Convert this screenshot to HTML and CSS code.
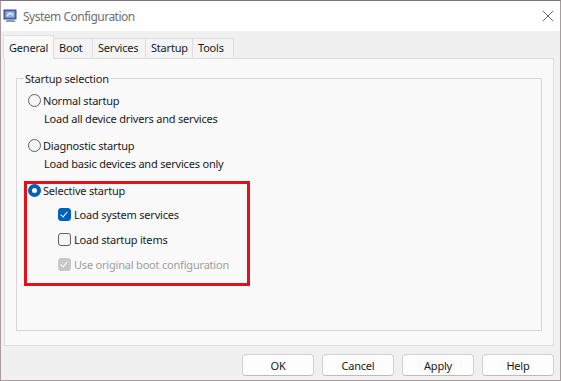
FILE: index.html
```html
<!DOCTYPE html>
<html lang="en">
<head>
  <meta charset="UTF-8" />
  <title>System Configuration</title>
  <link rel="stylesheet" href="styles.css">
</head>
<body>
  <div class="window">
    <header class="titlebar">
      <svg class="app-icon" width="15" height="14" viewBox="0 0 15 14">
        <rect x="1" y="1" width="12" height="9" fill="#5a6fb5" stroke="#3b4c8c" stroke-width="1"/>
        <rect x="2.5" y="2.5" width="9" height="6" fill="#8fb2e8"/>
        <path d="M4 7 L7 4 L10 6" stroke="#ffffff" stroke-width="1.2" fill="none"/>
        <path d="M4 11 L11 11 L13 13 L2 13 Z" fill="#9a9a9a"/>
      </svg>
      <span class="title">System Configuration</span>
      <svg class="close" width="12" height="12" viewBox="0 0 12 12">
        <path d="M1 1 L11 11 M11 1 L1 11" stroke="#6a6a6a" stroke-width="1"/>
      </svg>
    </header>

    <div class="content">
      <nav class="tabs">
        <div class="tab active">General</div>
        <div class="tab">Boot</div>
        <div class="tab">Services</div>
        <div class="tab">Startup</div>
        <div class="tab">Tools</div>
      </nav>

      <section class="page">
        <fieldset class="group">
          <legend>Startup selection</legend>

          <div class="option">
            <div class="row"><span class="radio"></span>Normal startup</div>
            <div class="desc">Load all device drivers and services</div>
          </div>

          <div class="option">
            <div class="row"><span class="radio"></span>Diagnostic startup</div>
            <div class="desc">Load basic devices and services only</div>
          </div>

          <div class="highlight">
            <div class="row"><span class="radio checked"></span>Selective startup</div>
            <div class="check-row"><span class="checkbox checked"></span>Load system services</div>
            <div class="check-row"><span class="checkbox"></span>Load startup items</div>
            <div class="check-row disabled"><span class="checkbox checked"></span>Use original boot configuration</div>
          </div>
        </fieldset>
      </section>

      <footer class="buttons">
        <button>OK</button>
        <button>Cancel</button>
        <button>Apply</button>
        <button>Help</button>
      </footer>
    </div>
  </div>
</body>
</html>
```

FILE: styles.css
```css
body {
  margin: 0;
  font-family: "Noto Sans", "Open Sans", sans-serif;
  font-size: 11px;
  letter-spacing: -0.2px;
  color: #1a1a1a;
  background: #ffffff;
}

.window {
  width: 561px;
  height: 381px;
  box-sizing: border-box;
  border: 1px solid #a99a9c;
  border-top-color: #7e7476;
  display: flex;
  flex-direction: column;
  background: #f0f0f0;
}

/* title bar */
.titlebar {
  height: 30px;
  background: #ffffff;
  display: flex;
  align-items: center;
  padding: 0 6px 0 2px;
  flex-shrink: 0;
}
.app-icon {
  margin-right: 5px;
}
.title {
  color: #707070;
  font-size: 12px;
  letter-spacing: -0.5px;
  flex: 1;
}

/* body of the dialog */
.content {
  flex: 1;
  display: flex;
  flex-direction: column;
  padding: 3px 6px 4px 2px;
}

.tabs {
  display: flex;
  align-items: flex-end;
  height: 24px;
  position: relative;
  z-index: 1;
}
.tab {
  height: 19px;
  line-height: 18px;
  box-sizing: border-box;
  padding: 0 0 0 5px;
  border: 1px solid #dedede;
  border-bottom: none;
  border-left: none;
  background: #f4f4f4;
  margin-bottom: 1px;
}
.tab.active {
  width: 51px;
  height: 24px;
  line-height: 24px;
  padding: 0 0 0 5px;
  background: #f9f9f9;
  border-left: 1px solid #dedede;
  margin-bottom: -1px;
}
.tab:nth-child(2) { width: 39px; }
.tab:nth-child(3) { width: 53px; }
.tab:nth-child(4) { width: 47px; }
.tab:nth-child(5) { width: 41px; }

.page {
  flex: 1;
  background: #f9f9f9;
  border: 1px solid #dcdcdc;
  margin-left: 1px;
  padding: 12px 11px 14px 11px;
  display: flex;
}

/* group box */
.group {
  flex: 1;
  margin: 0;
  border: 1px solid #d6d6d6;
  padding: 5px 7px 0 7px;
}
.group legend {
  padding: 0 1px;
}

.option {
  margin-bottom: 7px;
}

.row {
  display: flex;
  align-items: center;
  height: 19px;
  padding-left: 4px;
}
.desc {
  height: 19px;
  line-height: 18px;
  padding-left: 20px;
}

.radio {
  width: 11px;
  height: 11px;
  border: 1px solid #616161;
  border-radius: 50%;
  background: #f6f6f6;
  margin-right: 2px;
  flex-shrink: 0;
}
.radio.checked {
  width: 5px;
  height: 5px;
  border: 4px solid #005fb8;
  background: #ffffff;
}

.highlight {
  width: 219px;
  border: 3px solid #e0131c;
  padding: 0 0 6px 1px;
  margin-top: 0;
}
.highlight .row {
  padding-left: 0;
  height: 12px;
  margin-bottom: 6px;
}

.check-row {
  display: flex;
  align-items: center;
  height: 25px;
  padding-left: 30px;
  white-space: nowrap;
}
.check-row.disabled {
  color: #9d9d9d;
}

.checkbox {
  width: 11px;
  height: 11px;
  border: 1px solid #5f5f5f;
  border-radius: 3px;
  background: #f6f6f6;
  margin-right: 3px;
  position: relative;
  flex-shrink: 0;
}
.checkbox.checked {
  background: #005fb8;
  border-color: #005fb8;
}
.checkbox.checked::after {
  content: "";
  position: absolute;
  left: 3px;
  top: 1px;
  width: 3px;
  height: 6px;
  border: solid #ffffff;
  border-width: 0 1px 1px 0;
  transform: rotate(40deg);
}
.check-row.disabled .checkbox {
  background: #c7c7c7;
  border-color: #c7c7c7;
}

/* bottom buttons */
.buttons {
  display: flex;
  justify-content: flex-end;
  gap: 8px;
  padding-top: 8px;
  height: 22px;
}
.buttons button {
  width: 72px;
  height: 22px;
  font-family: inherit;
  font-size: 11px;
  letter-spacing: -0.2px;
  color: #1a1a1a;
  background: #fdfdfd;
  border: 1px solid #d0d0d0;
  border-bottom-color: #bcbcbc;
  border-radius: 4px;
  padding: 0;
}
```
